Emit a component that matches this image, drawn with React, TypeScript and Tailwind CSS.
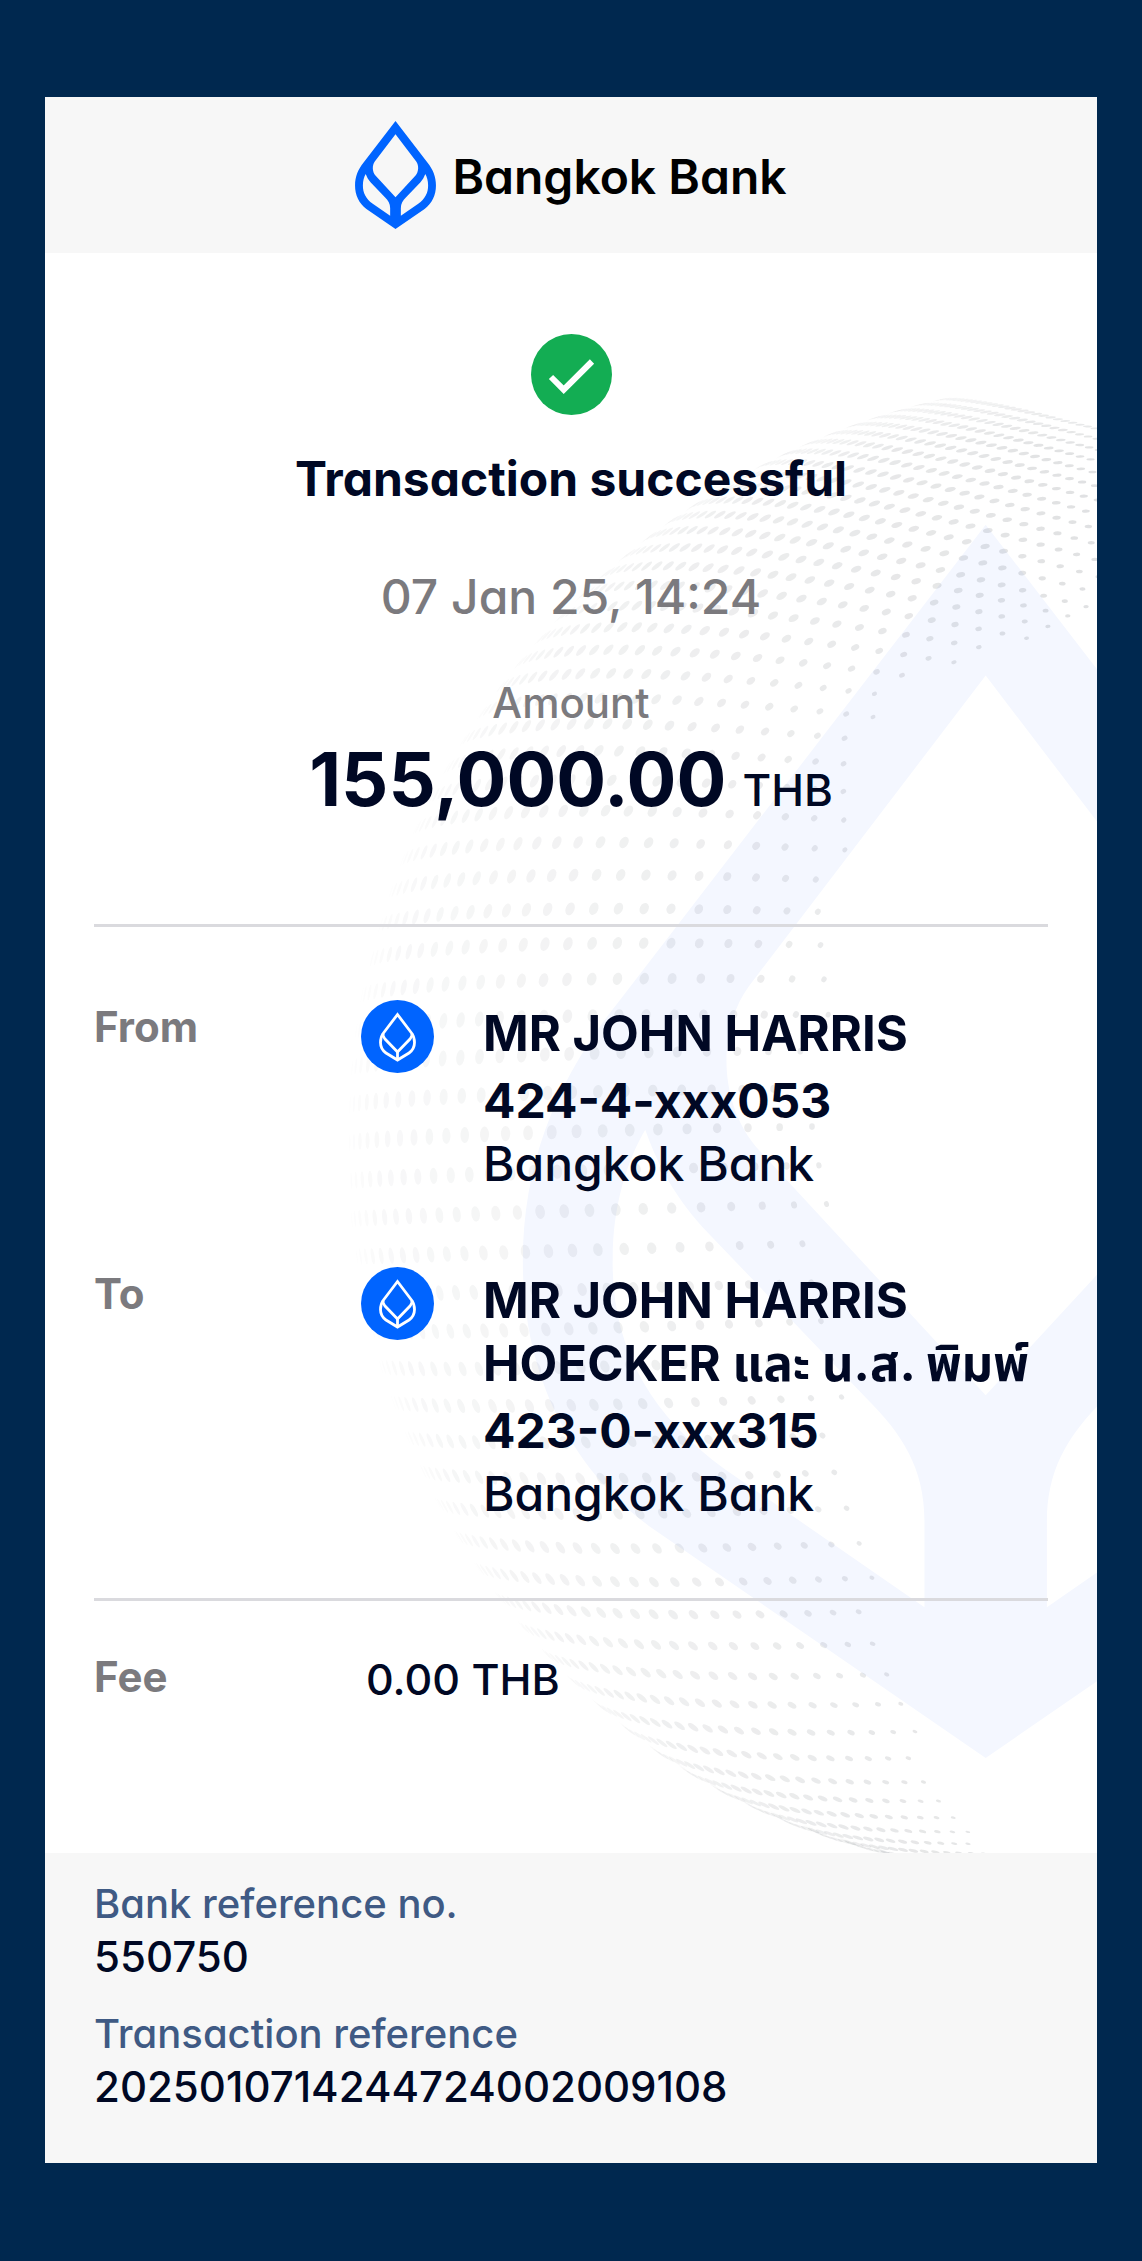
import React from "react";

const LEAF_OUTER =
  "M166 33 L262 158 C278 178 287 200 287 226 C287 255 275 280 253 296 L166 356 L79 296 C57 280 45 255 45 226 C45 200 54 178 70 158 Z";
const LEAF_KITE =
  "M166 72.5 L228 154 C236 165 236 184 226 196 L166 261 L106 196 C96 184 96 165 104 154 Z";
const LEAF_LEFT =
  "M77 191.5 C80 200 84 208 92 217 L135 262 C144 271 150 280 150 294 L150 316.5 L98 280.5 C78 266 68 248 68.5 225 C68.5 212 72 200 77 191.5 Z";
const LEAF_RIGHT =
  "M255 191.5 C252 200 248 208 240 217 L197 262 C188 271 182 280 182 294 L182 316.5 L234 280.5 C254 266 264 248 263.5 225 C263.5 212 260 200 255 191.5 Z";
const LEAF = `${LEAF_OUTER} ${LEAF_KITE} ${LEAF_LEFT} ${LEAF_RIGHT}`;

type Dot = { x: number; y: number; rx: number; ry: number; a: number; o: number };

/* Dots laid out along the latitudes and meridians of a sphere. */
function sphereDots(): Dot[] {
  const R = 750;
  const cx = 1095;
  const cy = 1145;
  const rad = Math.PI / 180;
  const dots: Dot[] = [];
  for (let k = -26; k <= 34; k++) {
    const lat = k > 0 ? 2.9 * k - 0.018 * k * k : 2.9 * k + 0.004 * k * k;
    const s = Math.sin(lat * rad);
    const c = Math.cos(lat * rad);
    const lonMax = 69 + Math.max(0, s - 0.6) * 110;
    const offset = ((((-k * 0.2) % 1) + 1) % 1) * 2.7;
    const damp = Math.min(1, Math.pow(c / 0.6, 1.3));
    const lift = (s < 0 ? 24 : 12) * Math.pow(s, 8);
    for (let lon = 3 + offset; lon <= lonMax; lon += 2.7) {
      const l = lon * rad;
      const bend =
        Math.max(-26, -6 - 40 * s) * Math.sin(2 * l) + (-21 + 20 * s + 110 * s * s) * (1 - Math.cos(l));
      const x = cx - R * c * Math.cos(l);
      const y0 = cy - R * s;
      const y = y0 + bend * damp - lift;
      const dx = x - cx;
      const dy = y0 - cy;
      const n = Math.sqrt(Math.max(0, 1 - (dx * dx + dy * dy) / (R * R)));
      const size = (8.6 - 5.6 * Math.pow(lon / lonMax, 3)) * (1 - 0.25 * Math.abs(s));
      dots.push({
        x,
        y,
        rx: Math.max(0.4, size * Math.min(0.85, n)),
        ry: size,
        a: (Math.atan2(dy, dx) * 180) / Math.PI,
        o: (0.025 + 0.00015 * (x - 345)) * Math.min(1, n * 3.5),
      });
    }
  }
  return dots;
}

const DOTS = sphereDots();

function Watermark() {
  return (
    <svg
      aria-hidden="true"
      className="pointer-events-none absolute top-0 right-0 h-full w-auto"
      viewBox="335 253 762 1602"
      preserveAspectRatio="xMaxYMin slice"
    >
      <path
        d={LEAF}
        fillRule="evenodd"
        fill="#f4f7ff"
        transform="translate(985.5 525) scale(3.83 3.823) translate(-166 -33)"
      />
      <g fill="#202830">
        {DOTS.map((d, i) => (
          <ellipse
            key={i}
            rx={d.rx.toFixed(1)}
            ry={d.ry.toFixed(1)}
            fillOpacity={d.o.toFixed(3)}
            transform={`translate(${d.x.toFixed(1)} ${d.y.toFixed(1)}) rotate(${d.a.toFixed(0)})`}
          />
        ))}
      </g>
    </svg>
  );
}

function BankAvatar() {
  return (
    <svg viewBox="0 0 73 73" className="h-[73px] w-[73px] shrink-0" role="img" aria-label="Bangkok Bank">
      <circle cx="36.5" cy="36.5" r="36.5" fill="#0064ff" />
      <g fill="none" stroke="#fff" strokeWidth="2.8" strokeLinejoin="miter">
        <path d="M36.5 14.5 L50.5 33 C53 36.5 53.5 39 53.5 42.5 C53.5 47 51.5 50.5 48 53 L36.5 60 L25 53 C21.5 50.5 19.5 47 19.5 42.5 C19.5 39 20 36.5 22.5 33 Z" />
        <path d="M22 33.5 C21.5 36 22.5 37 24 39 L36.5 52 L49 39 C50.5 37 51.5 36 51 33.5" />
        <path d="M36.5 51 L36.5 60" />
      </g>
    </svg>
  );
}

function Party({ label, name, account, bank }: { label: string; name: string[]; account: string; bank: string }) {
  return (
    <section className="flex items-start">
      <h2 className="w-[267px] shrink-0 pt-[3px] text-[42px] leading-[48px] font-bold text-[#7b7a7e]">{label}</h2>
      <BankAvatar />
      <div className="ml-[49px] pt-0.5 text-[48px] leading-[63px]">
        <p className="text-[49px] font-bold">
          {name.map((line) => (
            <span key={line} className="block whitespace-nowrap">
              {line}
            </span>
          ))}
        </p>
        <p className="mt-1 font-bold">{account}</p>
        <p className="font-medium">{bank}</p>
      </div>
    </section>
  );
}

function Reference({ label, value }: { label: string; value: string }) {
  return (
    <div className="leading-[53px]">
      <dt className="text-[40px] text-[#3f5a84]">{label}</dt>
      <dd className="text-[42px]">{value}</dd>
    </div>
  );
}

export default function App() {
  return (
    <div className="min-h-screen bg-[#00284f] px-[45px] pt-[97px] pb-[98px] font-['Inter','Noto_Sans_Thai','Noto_Sans',sans-serif] text-[#000824] [font-feature-settings:'cv11']">
      <main className="bg-white">
        <header className="flex h-[156px] items-center justify-center gap-4 bg-[#f7f7f7]">
          <svg viewBox="45 33 242 323" className="h-[108px] w-[81px]" aria-hidden="true">
            <path d={LEAF} fillRule="evenodd" fill="#0064ff" />
          </svg>
          <span className="pt-1 text-[48px] leading-[64px] font-semibold text-black">Bangkok Bank</span>
        </header>

        <div className="relative overflow-hidden">
          <Watermark />
          <div className="relative px-[49px] pt-[81px] pb-[148px]">
            <div className="flex flex-col items-center text-center">
              <svg viewBox="0 0 81 81" className="h-[81px] w-[81px]" aria-hidden="true">
                <circle cx="40.5" cy="40.5" r="40.5" fill="#13ad53" />
                <path d="M20 43 L32.7 55.7 L61 27.5" fill="none" stroke="#fff" strokeWidth="6" />
              </svg>
              <h1 className="mt-8 text-[48px] leading-[64px] font-bold">Transaction successful</h1>
              <time dateTime="2025-01-07T14:24" className="mt-[54px] text-[48px] leading-[64px] font-medium text-[#7b7a7e]">
                07 Jan 25, 14:24
              </time>
              <p className="mt-[50px] text-[42px] leading-[48px] font-medium text-[#7b7a7e]">Amount</p>
              <p className="mt-3 flex items-baseline gap-4">
                <span className="text-[74px] leading-[80px] font-bold">155,000.00</span>
                <span className="text-[44px] leading-[48px] font-medium">THB</span>
              </p>
            </div>

            <hr className="mt-[105px] border-t-[3px] border-[#dadade]" />

            <div className="flex flex-col gap-[72px] py-[73px]">
              <Party label="From" name={["MR JOHN HARRIS"]} account="424-4-xxx053" bank="Bangkok Bank" />
              <Party
                label="To"
                name={["MR JOHN HARRIS", "HOECKER และ น.ส. พิมพ์"]}
                account="423-0-xxx315"
                bank="Bangkok Bank"
              />
            </div>

            <hr className="border-t-[3px] border-[#dadade]" />

            <dl className="mt-[52px] flex items-start">
              <dt className="w-[272px] shrink-0 text-[42px] leading-[48px] font-bold text-[#7b7a7e]">Fee</dt>
              <dd className="text-[43px] leading-[52px] font-medium">0.00 THB</dd>
            </dl>
          </div>
        </div>

        <footer className="bg-[#f7f7f7] px-[49px] pt-6 pb-[50px]">
          <dl className="flex flex-col gap-6 font-medium">
            <Reference label="Bank reference no." value="550750" />
            <Reference label="Transaction reference" value="2025010714244724002009108" />
          </dl>
        </footer>
      </main>
    </div>
  );
}
